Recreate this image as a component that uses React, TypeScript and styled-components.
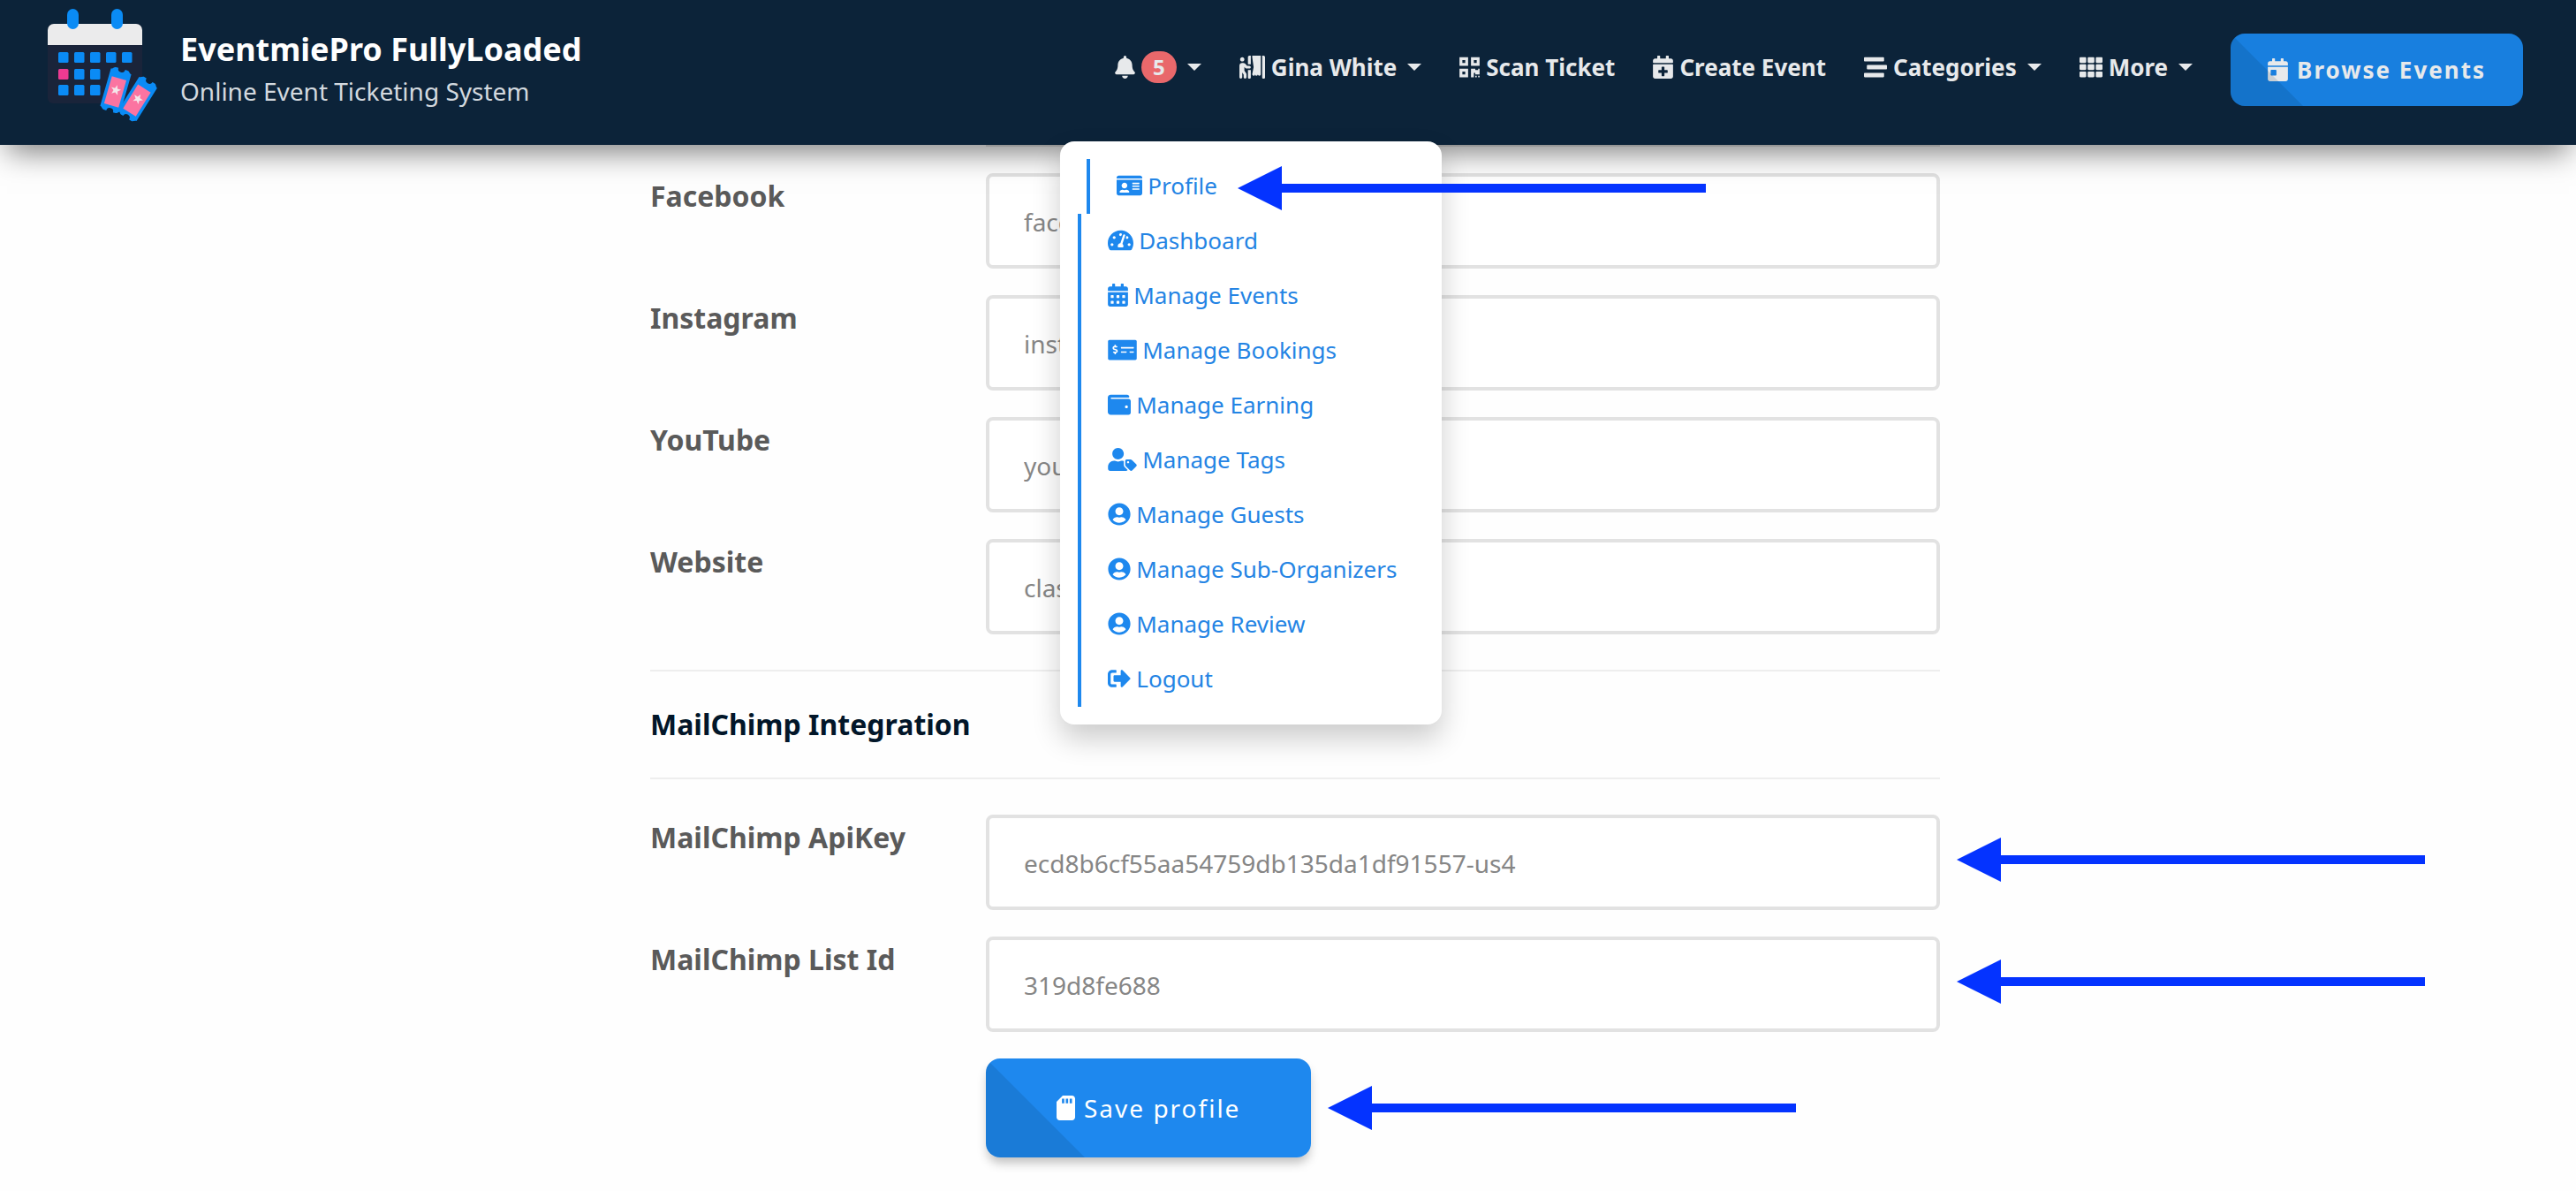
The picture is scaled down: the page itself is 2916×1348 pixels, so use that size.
import React from "react";
import styled, { createGlobalStyle, css } from "styled-components";
import {
  FaBell,
  FaCalendarAlt,
  FaCalendarDay,
  FaCalendarPlus,
  FaIdCard,
  FaMoneyCheckAlt,
  FaPersonBooth,
  FaQrcode,
  FaSdCard,
  FaSignOutAlt,
  FaStream,
  FaTachometerAlt,
  FaTh,
  FaUserCircle,
  FaUserTag,
  FaWallet,
} from "react-icons/fa";

const GlobalStyle = createGlobalStyle`
  * { box-sizing: border-box; }
  body {
    margin: 0;
    background: #fefefe;
    color: #5a5a5a;
    font-family: "Noto Sans", "Open Sans", sans-serif;
    overflow-x: hidden;
  }
  button, input { font-family: inherit; }
  a { color: inherit; text-decoration: none; }
  ul { list-style: none; margin: 0; padding: 0; }
  svg { display: block; flex: none; }
`;

const Glyph = styled.span<{ $width: number; $height?: number }>`
  flex: none;
  width: ${(p) => p.$width}px;
  svg {
    width: 100%;
    height: ${(p) => p.$height ?? 26}px;
  }
`;

const Header = styled.header`
  position: relative;
  z-index: 2;
  display: flex;
  align-items: center;
  justify-content: space-between;
  padding: 0 60px 6px 40px;
  background: #0c2339;
  box-shadow: 0 16px 32px -8px rgba(0, 0, 0, 0.5);
`;

const Brand = styled.a`
  display: flex;
  gap: 14px;
  height: 158px;
`;

const BrandText = styled.span`
  display: flex;
  flex-direction: column;
  padding-top: 32px;
`;

const BrandName = styled.strong`
  font-size: 36px;
  line-height: 48px;
  color: #fff;
`;

const Tagline = styled.span`
  font-size: 28px;
  line-height: 46px;
  color: #d3d9df;
`;

const Nav = styled.nav`
  display: flex;
  align-items: center;
  align-self: stretch;
  gap: 43px;
`;

const NavEntry = styled.div`
  position: relative;
  display: flex;
  align-items: center;
  align-self: stretch;
  padding-bottom: 6px;
`;

const navLook = css`
  display: flex;
  align-items: center;
  gap: 7px;
  padding: 0;
  border: 0;
  background: none;
  color: #e7e9eb;
  font-size: 26px;
  font-weight: 700;
  line-height: 40px;
  cursor: pointer;
`;

const NavButton = styled.button`${navLook}`;
const NavLink = styled.a`${navLook}`;

const Caret = styled.span`
  margin-left: 5px;
  border: 8px solid transparent;
  border-top-color: currentColor;
  border-bottom: 0;
`;

const Badge = styled.span`
  min-width: 40px;
  padding: 0 8px;
  border-radius: 18px;
  background: #e9686b;
  font-size: 24px;
  line-height: 36px;
  text-align: center;
`;

const cornerShade = css`
  position: relative;
  overflow: hidden;
  &::after {
    content: "";
    position: absolute;
    left: 0;
    bottom: 0;
    height: 100%;
    aspect-ratio: 1;
    background: rgba(0, 35, 60, 0.13);
    clip-path: polygon(0 0, 100% 100%, 0 100%);
  }
`;

const BrowseLink = styled.a`
  ${cornerShade}
  display: flex;
  align-items: center;
  gap: 10px;
  padding: 21px 42px;
  border-radius: 16px;
  background: #187fdf;
  color: #e7e9eb;
  font-size: 26px;
  font-weight: 700;
  line-height: 40px;
  letter-spacing: 2px;
`;

const Menu = styled.ul`
  position: absolute;
  top: 160px;
  right: -23px;
  width: 432px;
  padding: 20px;
  border-radius: 16px;
  background: #fff;
  box-shadow: 0 16px 32px rgba(0, 0, 0, 0.2);
`;

const MenuItem = styled.li<{ $active?: boolean }>`
  display: flex;
  margin-left: ${(p) => (p.$active ? 10 : 0)}px;
  padding: 0 0 2px 30px;
  border-left: 4px solid #1e88ee;
`;

const MenuLink = styled.a`
  position: relative;
  display: flex;
  align-items: center;
  gap: 6px;
  color: #2484e4;
  font-size: 26px;
  line-height: 60px;
  white-space: nowrap;
  ${Glyph} { color: #1e88ee; }
`;

const ArrowDrawing = styled.svg<{ $top: number; $gap: number }>`
  position: absolute;
  top: ${(p) => p.$top}px;
  left: 100%;
  width: 530px;
  height: 50px;
  margin-left: ${(p) => p.$gap}px;
  fill: #0433ff;
`;

const Main = styled.main`
  padding: 0 0 38px 16px;
`;

const Form = styled.form`
  width: 100%;
  max-width: 1460px;
  margin: 0 auto;
`;

const ScrolledField = styled.div`
  height: 2px;
  margin-left: 380px;
  border-bottom: 2px solid #e2e2e2;
`;

const Group = styled.div<{ $top: number }>`
  display: grid;
  gap: 30px;
  padding: ${(p) => p.$top}px 0 40px;
`;

const Row = styled.div`
  display: grid;
  grid-template-columns: 320px 1fr;
  column-gap: 60px;
  align-items: start;
`;

const Label = styled.label`
  padding-top: 4px;
  font-size: 32px;
  font-weight: 700;
  line-height: 44px;
`;

const Control = styled.div`
  position: relative;
`;

const TextBox = styled.input`
  display: block;
  width: 100%;
  height: 108px;
  padding: 2px 39px 0;
  border: 4px solid #e2e2e2;
  border-radius: 8px;
  background: #fff;
  color: #868686;
  font-size: 28px;
  outline: 0;
`;

const SectionTitle = styled.h2`
  margin: 0;
  padding: 38px 0;
  border: solid #eee;
  border-width: 2px 0;
  color: #021629;
  font-size: 32px;
  font-weight: 700;
  line-height: 44px;
`;

const SaveLine = styled.div`
  grid-column: 2;
  position: relative;
  justify-self: start;
  border-radius: 16px;
  box-shadow: 0 8px 12px -2px rgba(0, 0, 0, 0.25);
`;

const SaveButton = styled.button`
  ${cornerShade}
  display: flex;
  align-items: center;
  gap: 10px;
  height: 112px;
  padding: 0 80px;
  border: 0;
  border-radius: 16px;
  background: #1e88ee;
  color: #fff;
  font-size: 28px;
  letter-spacing: 2px;
  cursor: pointer;
`;

const Arrow = ({ top, gap = 19 }: { top: number; gap?: number }) => (
  <ArrowDrawing $top={top} $gap={gap} viewBox="0 0 530 50" aria-hidden="true">
    <path d="M0 25 50 0V20H530V30H50V50Z" />
  </ArrowDrawing>
);

const star =
  "M0-6 1.5-2 5.8-1.9 2.4.8 3.6 4.9 0 2.5-3.6 4.9-2.4.8-5.8-1.9-1.5-2Z";

const Ticket = ({ x, y, angle }: { x: number; y: number; angle: number }) => (
  <g transform={`translate(${x} ${y}) rotate(${angle})`}>
    <path
      fill="#0a8bf5"
      d="M-12-22C-10-22-9-25-7-25H-4A4 4 0 0 0 4-25H7C9-25 10-22 12-22V22C10 22 9 25 7 25H4A4 4 0 0 0-4 25H-7C-9 25-10 22-12 22Z"
    />
    <rect x="-8.5" y="-14" width="17" height="32" fill="#fb74a1" />
    <path d={star} fill="#f4e6ea" />
  </g>
);

const squares = [
  [26, 59], [44, 59], [62, 59], [80, 59], [98, 59],
  [26, 78], [44, 78], [62, 78],
  [26, 96], [44, 96], [62, 96],
];

const Logo = () => (
  <svg width="150" height="150" viewBox="0 0 150 150" aria-hidden="true">
    <rect x="14" y="27" width="107" height="90" rx="6" fill="#1a243a" />
    <path d="M14 51V34a7 7 0 0 1 7-7h93a7 7 0 0 1 7 7v17Z" fill="#ebebec" />
    <rect x="36" y="10" width="13" height="23" rx="6.5" fill="#0a8bf5" />
    <rect x="86" y="10" width="13" height="23" rx="6.5" fill="#0a8bf5" />
    {squares.map(([x, y]) => (
      <rect
        key={`${x}-${y}`}
        x={x}
        y={y}
        width="11.5"
        height="12"
        rx="1.5"
        fill={x === 26 && y === 78 ? "#ee3a92" : "#0a8bf5"}
      />
    ))}
    <Ticket x={91} y={102} angle={16} />
    <Ticket x={116} y={112} angle={32} />
  </svg>
);

const menuItems = [
  { icon: FaIdCard, width: 29, text: "Profile", active: true },
  { icon: FaTachometerAlt, width: 29, text: "Dashboard" },
  { icon: FaCalendarAlt, width: 23, text: "Manage Events" },
  { icon: FaMoneyCheckAlt, width: 33, text: "Manage Bookings" },
  { icon: FaWallet, width: 26, text: "Manage Earning" },
  { icon: FaUserTag, width: 33, text: "Manage Tags" },
  { icon: FaUserCircle, width: 26, text: "Manage Guests" },
  { icon: FaUserCircle, width: 26, text: "Manage Sub-Organizers" },
  { icon: FaUserCircle, width: 26, text: "Manage Review" },
  { icon: FaSignOutAlt, width: 26, text: "Logout" },
];

type FieldProps = { id: string; label: string; value: string; marked?: boolean };

const Field = ({ id, label, value, marked }: FieldProps) => (
  <Row>
    <Label htmlFor={id}>{label}</Label>
    <Control>
      <TextBox id={id} defaultValue={value} />
      {marked && <Arrow top={26} />}
    </Control>
  </Row>
);

export default function App() {
  return (
    <>
      <GlobalStyle />
      <Header>
        <Brand href="#">
          <Logo />
          <BrandText>
            <BrandName>EventmiePro FullyLoaded</BrandName>
            <Tagline>Online Event Ticketing System</Tagline>
          </BrandText>
        </Brand>
        <Nav>
          <NavEntry>
            <NavButton aria-label="Notifications">
              <Glyph $width={23}><FaBell /></Glyph>
              <Badge>5</Badge>
              <Caret />
            </NavButton>
          </NavEntry>
          <NavEntry>
            <NavButton aria-expanded="true">
              <Glyph $width={29}><FaPersonBooth /></Glyph>
              Gina White
              <Caret />
            </NavButton>
            <Menu>
              {menuItems.map(({ icon: Icon, width, text, active }) => (
                <MenuItem key={text} $active={active}>
                  <MenuLink href="#">
                    <Glyph $width={width}><Icon /></Glyph>
                    {text}
                    {active && <Arrow top={8} gap={23} />}
                  </MenuLink>
                </MenuItem>
              ))}
            </Menu>
          </NavEntry>
          <NavEntry>
            <NavLink href="#">
              <Glyph $width={23}><FaQrcode /></Glyph>
              Scan Ticket
            </NavLink>
          </NavEntry>
          <NavEntry>
            <NavLink href="#">
              <Glyph $width={23}><FaCalendarPlus /></Glyph>
              Create Event
            </NavLink>
          </NavEntry>
          <NavEntry>
            <NavButton>
              <Glyph $width={26}><FaStream /></Glyph>
              Categories
              <Caret />
            </NavButton>
          </NavEntry>
          <NavEntry>
            <NavButton>
              <Glyph $width={26}><FaTh /></Glyph>
              More
              <Caret />
            </NavButton>
          </NavEntry>
          <BrowseLink href="#">
            <Glyph $width={23}><FaCalendarDay /></Glyph>
            Browse Events
          </BrowseLink>
        </Nav>
      </Header>
      <Main>
        <Form>
          <ScrolledField />
          <Group $top={30}>
            <Field id="facebook" label="Facebook" value="facebook" />
            <Field id="instagram" label="Instagram" value="instagram" />
            <Field id="youtube" label="YouTube" value="youtube" />
            <Field id="website" label="Website" value="classiebit.com" />
          </Group>
          <SectionTitle>MailChimp Integration</SectionTitle>
          <Group $top={40}>
            <Field
              id="apikey"
              label="MailChimp ApiKey"
              value="ecd8b6cf55aa54759db135da1df91557-us4"
              marked
            />
            <Field id="listid" label="MailChimp List Id" value="319d8fe688" marked />
            <Row>
              <SaveLine>
                <SaveButton type="button">
                  <Glyph $width={21} $height={28}><FaSdCard /></Glyph>
                  Save profile
                </SaveButton>
                <Arrow top={31} />
              </SaveLine>
            </Row>
          </Group>
        </Form>
      </Main>
    </>
  );
}
